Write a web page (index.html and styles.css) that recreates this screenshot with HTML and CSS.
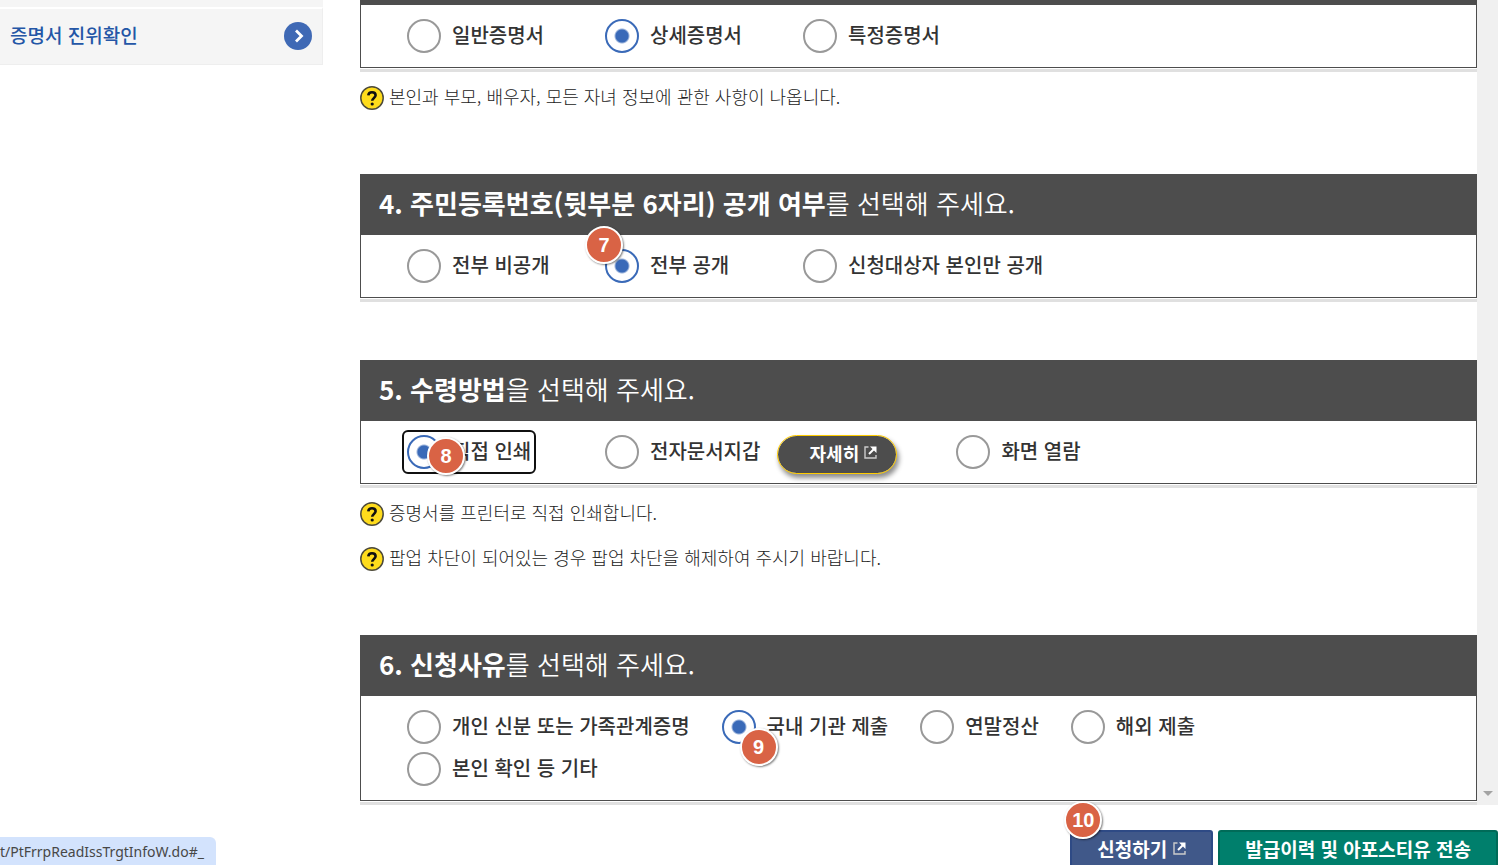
FILE: index.html
```html
<!DOCTYPE html>
<html lang="ko">
<head>
  <meta charset="UTF-8">
  <title>증명서 발급 신청</title>
  <link rel="stylesheet" href="styles.css">
</head>
<body>
  <div class="pane">
    <aside class="side">
      <div class="side-prev"></div>
      <a class="side-link" href="#verify">
        <span>증명서 진위확인</span>
        <svg width="28" height="28" viewBox="0 0 28 28"><circle cx="14" cy="14" r="14" fill="#3f69b5"/><path d="M12 8.5l5.5 5.5-5.5 5.5" fill="none" stroke="#fff" stroke-width="2.8"/></svg>
      </a>
    </aside>

    <main class="content">
      <section class="step">
        <div class="step-title cut"></div>
        <div class="options">
          <label class="option"><input type="radio" name="kind">일반증명서</label>
          <label class="option"><input type="radio" name="kind" checked>상세증명서</label>
          <label class="option"><input type="radio" name="kind">특정증명서</label>
        </div>
      </section>
      <div class="notes">
        <p class="note"><svg width="24" height="24" viewBox="0 0 24 24"><circle cx="12" cy="12" r="11.2" fill="#ffdc1c" stroke="#4d4a3a" stroke-width="1.5"/><path d="M8.3 9.4C8.5 7.3 10 6.3 12 6.3s3.6 1.1 3.6 3c0 2.6-3.4 2.7-3.4 5.5" fill="none" stroke="#111" stroke-width="2.6"/><circle cx="12.2" cy="18" r="1.6" fill="#111"/></svg>본인과 부모, 배우자, 모든 자녀 정보에 관한 사항이 나옵니다.</p>
      </div>

      <section class="step">
        <h2 class="step-title"><b>4. 주민등록번호(뒷부분 6자리) 공개 여부</b>를 선택해 주세요.</h2>
        <div class="options">
          <label class="option"><input type="radio" name="open">전부 비공개</label>
          <label class="option"><input type="radio" name="open" checked>전부 공개<span class="badge badge-7">7</span></label>
          <label class="option"><input type="radio" name="open">신청대상자 본인만 공개</label>
        </div>
      </section>
      <div class="space"></div>

      <section class="step">
        <h2 class="step-title"><b>5. 수령방법</b>을 선택해 주세요.</h2>
        <div class="options">
          <div class="cell"><label class="option focused"><input type="radio" name="receive" checked>직접 인쇄<span class="badge badge-8">8</span></label></div>
          <div class="cell wide">
            <label class="option"><input type="radio" name="receive">전자문서지갑</label>
            <button class="detail" type="button">자세히
              <svg width="13" height="13" viewBox="0 0 13 13"><path d="M4.5 1H1v11h11V9" fill="none" stroke="#ccc" stroke-width="1.4"/><path d="M6 .5h6.5V7z" fill="#fff"/><path d="M5 8l5-5" stroke="#fff" stroke-width="2"/></svg>
            </button>
          </div>
          <label class="option"><input type="radio" name="receive">화면 열람</label>
        </div>
      </section>
      <div class="notes">
        <p class="note"><svg width="24" height="24" viewBox="0 0 24 24"><circle cx="12" cy="12" r="11.2" fill="#ffdc1c" stroke="#4d4a3a" stroke-width="1.5"/><path d="M8.3 9.4C8.5 7.3 10 6.3 12 6.3s3.6 1.1 3.6 3c0 2.6-3.4 2.7-3.4 5.5" fill="none" stroke="#111" stroke-width="2.6"/><circle cx="12.2" cy="18" r="1.6" fill="#111"/></svg>증명서를 프린터로 직접 인쇄합니다.</p>
        <p class="note"><svg width="24" height="24" viewBox="0 0 24 24"><circle cx="12" cy="12" r="11.2" fill="#ffdc1c" stroke="#4d4a3a" stroke-width="1.5"/><path d="M8.3 9.4C8.5 7.3 10 6.3 12 6.3s3.6 1.1 3.6 3c0 2.6-3.4 2.7-3.4 5.5" fill="none" stroke="#111" stroke-width="2.6"/><circle cx="12.2" cy="18" r="1.6" fill="#111"/></svg>팝업 차단이 되어있는 경우 팝업 차단을 해제하여 주시기 바랍니다.</p>
      </div>

      <section class="step">
        <h2 class="step-title"><b>6. 신청사유</b>를 선택해 주세요.</h2>
        <div class="options">
          <label class="option"><input type="radio" name="reason">개인 신분 또는 가족관계증명</label>
          <label class="option"><input type="radio" name="reason" checked>국내 기관 제출<span class="badge badge-9">9</span></label>
          <label class="option short"><input type="radio" name="reason">연말정산</label>
          <label class="option short"><input type="radio" name="reason">해외 제출</label>
          <label class="option"><input type="radio" name="reason">본인 확인 등 기타</label>
        </div>
      </section>
    </main>

    <div class="scrollbar">
      <svg width="10" height="5" viewBox="0 0 10 5"><path d="M0 0h10L5 5z" fill="#a3a3a3"/></svg>
    </div>
  </div>

  <footer class="actions">
    <button class="btn btn-blue" type="button">신청하기
      <svg width="13" height="13" viewBox="0 0 13 13"><path d="M4.5 1H1v11h11V9" fill="none" stroke="#ccc" stroke-width="1.4"/><path d="M6 .5h6.5V7z" fill="#fff"/><path d="M5 8l5-5" stroke="#fff" stroke-width="2"/></svg>
      <span class="badge badge-10">10</span>
    </button>
    <button class="btn btn-green" type="button">발급이력 및 아포스티유 전송</button>
  </footer>

  <div class="status">t/PtFrrpReadIssTrgtInfoW.do#_</div>
</body>
</html>
```

FILE: styles.css
```css
* {
  box-sizing: border-box;
}
body {
  margin: 0;
  height: 100vh;
  display: flex;
  flex-direction: column;
  overflow: hidden;
  position: relative;
  font-family: "Noto Sans CJK KR", sans-serif;
  color: #333;
  background: #fff;
}
button {
  font-family: inherit;
  cursor: pointer;
}
.pane {
  flex: 1;
  min-height: 0;
  display: flex;
  padding-right: 4px;
}

/* left menu */
.side {
  width: 323px;
  flex-shrink: 0;
}
.side-prev {
  height: 7px;
  background: #f5f5f5;
}
.side-link {
  display: flex;
  align-items: center;
  justify-content: space-between;
  height: 58px;
  padding: 0 10px 2px;
  border-top: 2px solid #fff;
  border-right: 1px solid #eee;
  border-bottom: 1px solid #eee;
  background: #f5f5f5;
  color: #2456a6;
  font-size: 19px;
  font-weight: 500;
  text-decoration: none;
}
.side-link span {
  padding-bottom: 2px;
}

/* steps */
.content {
  flex: 1;
  margin-left: 37px;
}
.step {
  border: 1px solid #4d4d4d;
  border-top: 0;
  box-shadow: 0 1px 0 #fff, 0 4px 0 #e0e0e0;
}
.step-title {
  margin: 0 -1px;
  padding: 0 19px;
  height: 61px;
  line-height: 58px;
  background: #4d4d4d;
  color: #fff;
  font-size: 26px;
  font-weight: 350;
}
.step-title.cut {
  height: 5px;
}
.step-title b {
  font-weight: 700;
}
.options {
  display: flex;
  flex-wrap: wrap;
  gap: 8px 32px;
  padding: 14px 80px 14px 46px;
}
.option {
  position: relative;
  display: flex;
  gap: 11px;
  height: 34px;
  min-width: 166px;
  line-height: 32px;
  font-size: 20px;
  font-weight: 500;
}
.option.short {
  min-width: 0;
}
.cell {
  display: flex;
  min-width: 166px;
}
.cell .option {
  min-width: 0;
}
.cell.wide {
  margin-right: 27px;
  gap: 17px;
}
.focused {
  outline: 2px solid #101010;
  outline-offset: 3px;
  border-radius: 1px;
}
.option input {
  appearance: none;
  width: 34px;
  height: 34px;
  margin: 0;
  border: 2px solid #999;
  border-radius: 50%;
  background: #fff;
}
.option input:checked {
  border-color: #3a6ab8;
  background: radial-gradient(circle, #3a6ab8 6px, #fff 8px);
}
.detail {
  display: flex;
  align-items: center;
  justify-content: center;
  gap: 5px;
  width: 120px;
  height: 39px;
  margin-bottom: -5px;
  padding: 0 0 4px 12px;
  border: 1px solid #ffcc00;
  border-radius: 20px;
  background: #4d4d4d;
  background-clip: padding-box;
  box-shadow: 2px 4px 5px rgba(0, 0, 0, 0.45);
  color: #fff;
  font-size: 18px;
  font-weight: 700;
}
.space {
  height: 62px;
}

/* help lines */
.notes {
  display: flex;
  flex-direction: column;
  gap: 21px;
  padding: 18px 0 64px;
}
.note {
  display: flex;
  gap: 5px;
  margin: 0;
  height: 24px;
  line-height: 21px;
  font-size: 18px;
  font-weight: 300;
  color: #222;
}

/* numbered markers */
.badge {
  position: absolute;
  z-index: 2;
  width: 38px;
  height: 38px;
  border: 2px solid #fff;
  border-radius: 50%;
  background: #d96345;
  box-shadow: 1px 1px 2px rgba(0, 0, 0, 0.5);
  color: #fff;
  font: bold 20px/34px "Liberation Sans", sans-serif;
  text-align: center;
}
.badge-7 {
  left: -20px;
  top: -23px;
}
.badge-8 {
  left: 20px;
  top: 2px;
}
.badge-9 {
  left: 18px;
  top: 18px;
}
.badge-10 {
  left: -8px;
  top: -31px;
}

.scrollbar {
  display: flex;
  align-items: flex-end;
  justify-content: center;
  width: 21px;
  padding-bottom: 9px;
  background: #f0f0f0;
}

/* bottom buttons */
.actions {
  display: flex;
  justify-content: flex-end;
  gap: 5px;
  height: 60px;
  padding: 25px 4px 0 0;
}
.btn {
  position: relative;
  display: flex;
  align-items: center;
  gap: 6px;
  height: 42px;
  padding: 0 25px 6px;
  border-radius: 3px;
  color: #fff;
  font-size: 19px;
  font-weight: 700;
}
.btn-blue {
  border: 2px solid #2e4a85;
  background: #405889;
}
.btn-green {
  border: 2px solid #006b58;
  background: #007f6c;
}

/* link address bubble */
.status {
  position: absolute;
  left: 0;
  bottom: 0;
  width: 216px;
  height: 28px;
  border-radius: 0 6px 0 0;
  background: #d3e3fd;
  color: #474747;
  font: 14px/29px "Noto Sans", sans-serif;
  white-space: nowrap;
}
```
